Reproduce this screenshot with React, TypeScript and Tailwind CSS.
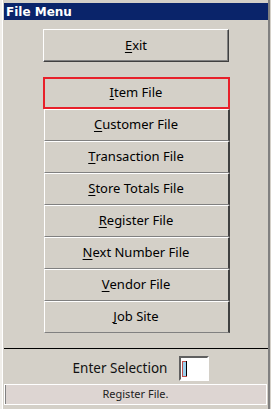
const items = [
  { key: 'I', rest: 'tem File' },
  { key: 'C', rest: 'ustomer File' },
  { key: 'T', rest: 'ransaction File' },
  { key: 'S', rest: 'tore Totals File' },
  { key: 'R', rest: 'egister File' },
  { key: 'N', rest: 'ext Number File' },
  { key: 'V', rest: 'endor File' },
  { key: 'J', rest: 'ob Site' },
]

export default function App() {
  return (
    <div
      className="flex h-[409px] w-[271px] flex-col overflow-hidden border-l-[2px] border-r-[1px] border-l-[#f0eeea] border-r-[#d4d0c8] bg-[#d4d0c8]"
      style={{ fontFamily: '"Noto Sans", Tahoma, sans-serif' }}
    >
      <div className="flex h-full flex-col border-l border-r-[2px] border-l-white border-r-[#808080] pl-[1px]">
        <div
          className="mt-[3px] flex h-[17px] items-center bg-[#0a246a] pl-[2px] text-[12px] font-bold text-white"
          style={{ fontFamily: '"DejaVu Sans", sans-serif' }}
        >
          File Menu
        </div>

        <button className="mx-auto mt-[9px] flex h-[33px] w-[186px] items-center justify-center border border-b-[#404040] border-l-white border-r-[#404040] border-t-white text-[13px] text-black shadow-[inset_-1px_-1px_0_#808080]">
          <span className="underline underline-offset-2">E</span>xit
        </button>

        <div className="mx-auto mt-[15px] flex w-[187px] flex-col">
          {items.map((it, i) =>
            i === 0 ? (
              <div
                key={it.key}
                className="flex h-[32px] items-center justify-center border-[2px] border-[#e8202a] text-[13px] text-black"
              >
                <span className="underline underline-offset-2">{it.key}</span>
                {it.rest}
              </div>
            ) : (
              <div
                key={it.key}
                className="ml-[1px] flex h-[32px] items-center justify-center border-b border-l border-r-[2px] border-t border-b-[#808080] border-l-white border-r-[#404040] border-t-white text-[13px] text-black"
              >
                <span className="underline underline-offset-2">{it.key}</span>
                {it.rest}
              </div>
            ),
          )}
        </div>

        <div className="mt-[15px] h-[1px] w-full bg-black" />

        <div className="mt-[7px] flex items-center justify-center gap-[12px] pl-[10px]">
          <span className="text-[13.5px] text-[#111]">Enter Selection</span>
          <div className="flex h-[25px] w-[30px] items-center border-[2px] border-b-white border-l-[#606060] border-r-white border-t-[#606060] bg-white pl-[2px]">
            <span className="h-[14px] w-[3px] bg-[#9cd0ec] outline outline-1 outline-[#c0504d]" />
            <span className="h-[15px] w-[1px] bg-black" />
          </div>
        </div>

        <div className="mr-[1px] mt-[3px] flex h-[21px] items-center justify-center border border-white bg-[#ddd5d2] text-[11px] text-[#222] shadow-[inset_1px_0_0_#808080]">
          Register File.
        </div>
      </div>
    </div>
  )
}
